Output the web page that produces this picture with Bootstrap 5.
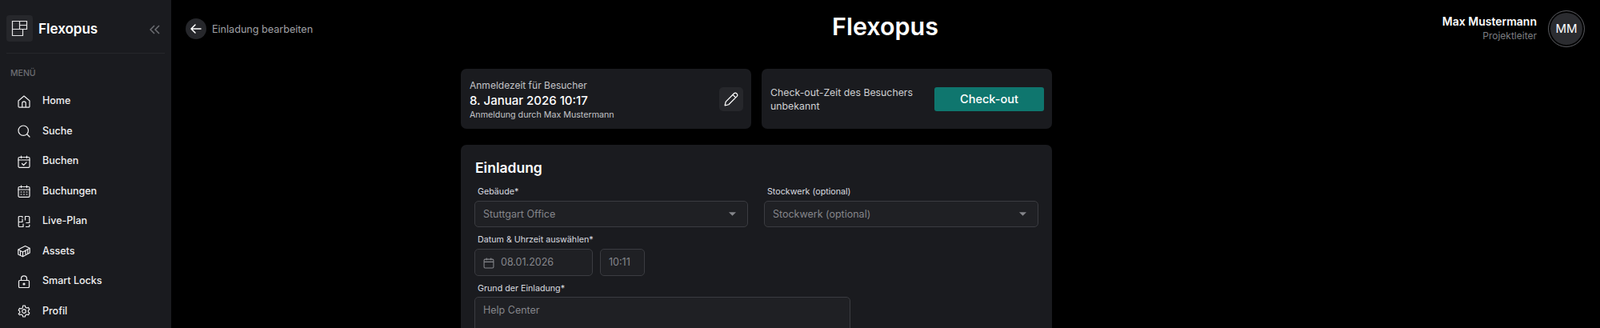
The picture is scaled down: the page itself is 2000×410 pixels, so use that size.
<!DOCTYPE html>
<html lang="de">
<head>
  <meta charset="UTF-8">
  <meta name="viewport" content="width=device-width, initial-scale=1.0">
  <title>Flexopus</title>
  <link href="https://cdn.jsdelivr.net/npm/bootstrap@5.3.0/dist/css/bootstrap.min.css" rel="stylesheet">
  <style>
    html, body { height: 410px; overflow: hidden; }
    body { background: #000; color: #fff; font-family: "Inter", "Liberation Sans", sans-serif; }
    svg { display: block; flex: none; }
    .side-bar { width: 214px; height: 410px; background: #1a1b1f; flex: none; padding: 19px 8px 0; overflow: hidden; }
    .logo-box { width: 33px; height: 33px; background: #26272b; border-radius: 4px; }
    .logo-name { font-size: 17px; font-weight: 600; margin-left: 7px; position: relative; top: 1px; }
    .collapse-btn { margin-left: auto; margin-right: 6px; position: relative; top: 1px; }
    .side-rule { border-top: 1px solid #26272b; margin-top: 14px; }
    .menu-title { font-size: 10.5px; color: #6d6e73; font-weight: 500; margin: 18px 0 0 5px; line-height: 14px; }
    .side-link { height: 37.5px; padding-left: 14px; color: #f0f0f1; font-size: 12.5px; font-weight: 500; text-decoration: none; gap: 15px; }
    .side-list { margin-top: 9px; }
    .top-head { height: 72px; display: grid; grid-template-columns: 1fr auto 1fr; padding: 0 19px 0 18px; }
    .back-btn { width: 26px; height: 26px; background: #26272b; border-radius: 50%; }
    .back-text { font-size: 12.6px; color: #a1a2a7; margin-left: 7px; position: relative; top: 1px; }
    .page-name { font-size: 30.5px; font-weight: 600; line-height: 1; margin: 0; position: relative; top: -3px; }
    .user-name { font-size: 14px; font-weight: 600; line-height: 18px; }
    .user-role { font-size: 12px; color: #7c7d82; line-height: 18px; }
    .user-avatar { width: 46px; height: 46px; border-radius: 50%; background: #2b2c30; border: 1px solid #55565a; box-shadow: inset 0 0 0 2px #000; font-size: 15px; font-weight: 400; margin-left: 14px; }
    .page-body { width: 739px; margin: 14px 0 0 362px; }
    .info-box { background: #1a1b1f; border-radius: 7px; height: 75px; width: 363px; padding: 0 10px 0 11px; }
    .info-small { font-size: 12px; color: #c4c5c9; line-height: 17px; margin-top: 1px; }
    .info-date { font-size: 15px; font-weight: 500; line-height: 21px; }
    .info-by { font-size: 10.7px; color: #c4c5c9; line-height: 15px; }
    .edit-btn { width: 30px; height: 30px; background: #26272b; border-radius: 5px; border: 0; padding: 0; }
    .checkout-text { font-size: 12.3px; color: #d0d1d4; line-height: 16.5px; margin-top: 2px; }
    .checkout-btn { width: 137px; height: 30px; background: #0f766e; border: 0; border-radius: 3px; color: #fff; font-size: 14.5px; font-weight: 500; padding: 0; flex: none; }
    .invite-box { background: #1a1b1f; border-radius: 7px; margin-top: 20px; height: 260px; padding: 16px 17px; }
    .invite-title { font-size: 17.5px; font-weight: 600; line-height: 26px; margin: 0 0 0 1px; }
    .field-label { font-size: 10.7px; color: #dcdde0; line-height: 14px; margin: 0 0 4px 4px; display: block; font-weight: 400; }
    .field-input.form-select, .field-input.form-control { background-color: #1f2024; border: 1px solid #3b3c41; border-radius: 5px; color: #85868b; font-size: 12.5px; height: 33px; padding: 1px 10px 0; box-shadow: none; }
    .field-input.form-select { background-image: url("data:image/svg+xml,%3Csvg xmlns='http://www.w3.org/2000/svg' viewBox='0 0 10 5'%3E%3Cpath fill='%2385868b' d='M0 0h10L5 5z'/%3E%3C/svg%3E"); background-size: 9px 5px; background-position: right 14px center; }
    .field-input::placeholder { color: #85868b; }
    .form-row-one { margin-top: 10px; }
    .select-col { width: 342px; }
    .select-col:last-child { width: 343px; }
    .date-row { gap: 9px; }
    .date-field { width: 148px; gap: 8px; }
    .field-input.date-field, .field-input.time-field { height: 34px; }
    .time-field { width: 56px; }
    .label-gap { margin-top: 9px; }
    .label-gap-last { margin-top: 9px; margin-bottom: 3px; }
    .reason-field.form-control { width: 470px; height: 50px; padding-top: 7px; }
  </style>
</head>
<body>
  <div class="d-flex">
    <aside class="side-bar">
      <div class="d-flex align-items-center">
        <div class="logo-box d-flex align-items-center justify-content-center">
          <svg width="21" height="21" viewBox="0 0 21 21" fill="none" stroke="#e4e4e6" stroke-width="1.200"><path d="M1.500 1.500h18v10h-5v8h-13zM1.500 11.500h13M10.500 1.500v10M10.500 6.500h9"/></svg>
        </div>
        <span class="logo-name">Flexopus</span>
        <svg class="collapse-btn" width="13" height="12" viewBox="0 0 13 12" fill="none" stroke="#6d6e73" stroke-width="1.500"><path d="M6 1 1 6l5 5M12 1 7 6l5 5"/></svg>
      </div>
      <div class="side-rule"></div>
      <div class="menu-title">MENÜ</div>
      <nav class="side-list d-flex flex-column">
        <a class="side-link d-flex align-items-center" href="#"><svg width="16" height="16" viewBox="0 0 16 16" fill="none" stroke="#f0f0f1" stroke-width="1.200" stroke-linejoin="round"><path d="M1 7 8 1l7 6v7a1.200 1.200 0 0 1-1.200 1.200H2.200A1.200 1.200 0 0 1 1 14zM5.800 15V10a2.200 2.200 0 0 1 4.400 0v5"/></svg>Home</a>
        <a class="side-link d-flex align-items-center" href="#"><svg width="16" height="16" viewBox="0 0 16 16" fill="none" stroke="#f0f0f1" stroke-width="1.200" stroke-linecap="round"><circle cx="7.200" cy="7.200" r="6.200"/><path d="m12 12 3 3"/></svg>Suche</a>
        <a class="side-link d-flex align-items-center" href="#"><svg width="16" height="16" viewBox="0 0 16 16" fill="none" stroke="#f0f0f1" stroke-width="1.200" stroke-linecap="round" stroke-linejoin="round"><rect x="1" y="2.500" width="14" height="12.800" rx="1.300"/><path d="M1 6h14M4.500 1v2.500M11.500 1v2.500M5.500 10.500l2 2 3.500-3.500"/></svg>Buchen</a>
        <a class="side-link d-flex align-items-center" href="#"><svg width="16" height="16" viewBox="0 0 16 16" fill="none" stroke="#f0f0f1" stroke-width="1.200" stroke-linecap="round"><rect x="1" y="2.500" width="14" height="12.800" rx="1.300"/><path d="M1 6h14M4.500 1v2.500M11.500 1v2.500M4 9h1M7.500 9h1M11 9h1M4 12h1M7.500 12h1M11 12h1"/></svg>Buchungen</a>
        <a class="side-link d-flex align-items-center" href="#"><svg width="16" height="16" viewBox="0 0 16 16" fill="none" stroke="#f0f0f1" stroke-width="1.200" stroke-linecap="round" stroke-linejoin="round"><path d="M6 1.500H2.200a1 1 0 0 0-1 1v11a1 1 0 0 0 1 1H7M9.500 1.500h4.300a1 1 0 0 1 1 1v7h-4M1.200 8.500H6V5M6 1.500V3M9.500 1.500V6M14.800 12v1.500a1 1 0 0 1-1 1H10.500M7 11v3.500"/></svg>Live-Plan</a>
        <a class="side-link d-flex align-items-center" href="#"><svg width="16" height="16" viewBox="0 0 16 16" fill="none" stroke="#f0f0f1" stroke-width="1.200" stroke-linejoin="round"><path d="M.8 6 9.500 1.500l5.700 2.700v5.800L6.500 14.800.8 12zM.8 6l5.700 3 8.700-4.800M6.500 9v5.800M3.500 7.500v5.500M10 6.500v5.500M12.700 5.200v5.800"/></svg>Assets</a>
        <a class="side-link d-flex align-items-center" href="#"><svg width="16" height="16" viewBox="0 0 16 16" fill="none" stroke="#f0f0f1" stroke-width="1.200"><rect x="1.500" y="6.500" width="13" height="9" rx="1.300"/><path d="M4.500 6.500V4.300a3.500 3.500 0 0 1 7 0v2.200"/><circle cx="8" cy="11" r="1" fill="#f0f0f1"/></svg>Smart Locks</a>
        <a class="side-link d-flex align-items-center" href="#"><svg width="16" height="16" viewBox="0 0 16 16" fill="none" stroke="#f0f0f1" stroke-width="1.200" stroke-linejoin="round"><path d="M6.700 1h2.600l.5 2 1.700 1 2-.6 1.300 2.300-1.500 1.400v1.800l1.500 1.400-1.300 2.300-2-.6-1.700 1-.5 2H6.700l-.5-2-1.700-1-2 .6L1.200 11.300l1.500-1.400V8.100L1.200 6.700l1.300-2.300 2 .6 1.700-1z"/><circle cx="8" cy="8" r="2.300"/></svg>Profil</a>
      </nav>
    </aside>

    <main class="flex-grow-1">
      <header class="top-head align-items-center">
        <div class="d-flex align-items-center">
          <button class="back-btn border-0 p-0 d-flex align-items-center justify-content-center" type="button" aria-label="Zurück">
            <svg width="14" height="12" viewBox="0 0 14 12" fill="none" stroke="#fff" stroke-width="1.500" stroke-linecap="round" stroke-linejoin="round"><path d="M13 6H1M6 1 1 6l5 5"/></svg>
          </button>
          <span class="back-text">Einladung bearbeiten</span>
        </div>
        <h1 class="page-name">Flexopus</h1>
        <div class="d-flex align-items-center justify-content-end">
          <div class="text-end">
            <div class="user-name">Max Mustermann</div>
            <div class="user-role">Projektleiter</div>
          </div>
          <div class="user-avatar d-flex align-items-center justify-content-center">MM</div>
        </div>
      </header>

      <div class="page-body">
        <div class="d-flex justify-content-between">
          <section class="info-box d-flex align-items-center justify-content-between">
            <div>
              <div class="info-small">Anmeldezeit für Besucher</div>
              <div class="info-date">8. Januar 2026 10:17</div>
              <div class="info-by">Anmeldung durch Max Mustermann</div>
            </div>
            <button class="edit-btn d-flex align-items-center justify-content-center" type="button" aria-label="Bearbeiten">
              <svg width="18" height="18" viewBox="0 0 16 16" fill="none" stroke="#fff" stroke-width="1.100" stroke-linejoin="round"><path d="M1 15l1-4.200L11.200 1.600a1.900 1.900 0 0 1 2.700 0l.5.500a1.900 1.900 0 0 1 0 2.700L5.200 14zM9.800 3l3.200 3.200"/></svg>
            </button>
          </section>
          <section class="info-box d-flex align-items-center justify-content-between">
            <div class="checkout-text">Check-out-Zeit des Besuchers<br>unbekannt</div>
            <button class="checkout-btn" type="button">Check-out</button>
          </section>
        </div>

        <section class="invite-box">
          <h2 class="invite-title">Einladung</h2>
          <div class="d-flex justify-content-between form-row-one">
            <div class="select-col">
              <label class="field-label">Gebäude*</label>
              <select class="form-select field-input"><option>Stuttgart Office</option></select>
            </div>
            <div class="select-col">
              <label class="field-label">Stockwerk (optional)</label>
              <select class="form-select field-input"><option>Stockwerk (optional)</option></select>
            </div>
          </div>
          <label class="field-label label-gap">Datum &amp; Uhrzeit auswählen*</label>
          <div class="d-flex date-row">
            <div class="form-control field-input date-field d-flex align-items-center">
              <svg width="14" height="14" viewBox="0 0 13 13" fill="none" stroke="#85868b" stroke-width="1"><rect x="1" y="2" width="11" height="10" rx="1.200"/><path d="M1 5h11M4 .5V3M9 .5V3"/></svg>
              <span>08.01.2026</span>
            </div>
            <div class="form-control field-input time-field d-flex align-items-center">10:11</div>
          </div>
          <label class="field-label label-gap-last">Grund der Einladung*</label>
          <textarea class="form-control field-input reason-field" placeholder="Help Center"></textarea>
        </section>
      </div>
    </main>
  </div>
  <script src="https://cdn.jsdelivr.net/npm/bootstrap@5.3.0/dist/js/bootstrap.bundle.min.js"></script>
</body>
</html>
